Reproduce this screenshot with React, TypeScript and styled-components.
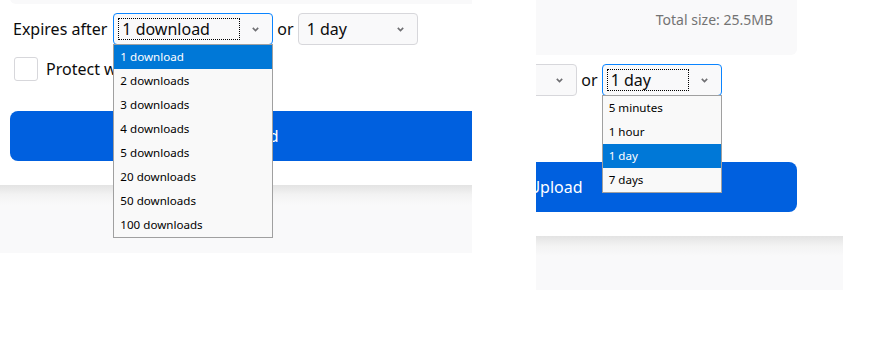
import React from 'react'
import styled, { createGlobalStyle } from 'styled-components'

const GlobalStyle = createGlobalStyle`
  html, body {
    margin:0;
    padding:0;
    background:#fff;
  }
  body {
    font-family: "Noto Sans", "Liberation Sans", Arial, sans-serif;
    color:#0c0c0d;
  }
`

const Stage = styled.div`
  display:flex;
  align-items:flex-start;
  gap:64px;
`

// one crop of the page, the form inside is shifted so the crop shows the right part
const Viewport = styled.div<{ $w: number; $h: number }>`
  flex:none;
  width:${p => p.$w}px;
  height:${p => p.$h}px;
  overflow:hidden;
  background:#fff;
`

const Shift = styled.div<{ $x: number; $y: number }>`
  margin-left:${p => -p.$x}px;
  margin-top:${p => -p.$y}px;
`

const Form = styled.div`
  width:539px;
  display:flex;
  flex-direction:column;
`

const SizeCard = styled.div`
  margin-left:10px;
  width:483px;
  height:64px;
  box-sizing:border-box;
  padding:19px 24px 0 0;
  background:#f9f9fa;
  border-radius:0 0 6px 6px;
  text-align:right;
  font-size:14px;
  line-height:20px;
  color:#737373;
`

const ExpiryRow = styled.div`
  display:flex;
  align-items:center;
  height:32px;
  margin:9px 0 0 13px;
  font-size:16px;
`

const Label = styled.span`
  margin-right:6px;
  white-space:nowrap;
`

const Or = styled.span`
  margin:0 4px;
`

const SelectBox = styled.div<{ $w: number; $focused: boolean }>`
  position:relative;
  flex:none;
  display:flex;
  align-items:center;
  width:${p => p.$w}px;
  height:32px;
  box-sizing:border-box;
  padding:0 13px 0 4px;
  border:1px solid ${p => (p.$focused ? '#0a84ff' : '#d7d7db')};
  border-radius:4px;
  background:#f9f9fa;
`

const Value = styled.span<{ $focused: boolean }>`
  flex:1;
  height:22px;
  box-sizing:border-box;
  margin-right:12px;
  padding:0 3px;
  border:1px dotted ${p => (p.$focused ? '#000' : 'transparent')};
  line-height:20px;
  white-space:nowrap;
`

const Chevron = styled.svg`
  flex:none;
  width:7px;
  height:5px;
`

const OptionList = styled.ul`
  position:absolute;
  z-index:10;
  top:100%;
  left:-1px;
  width:100%;
  margin:0;
  padding:0;
  list-style:none;
  border:1px solid #a0a0a0;
  background:#f9f9f9;
`

const Option = styled.li<{ $active: boolean }>`
  height:24px;
  padding-left:6px;
  font-size:11.6px;
  line-height:24px;
  white-space:nowrap;
  color:${p => (p.$active ? '#fff' : '#000')};
  background:${p => (p.$active ? '#0078d7' : 'transparent')};
`

const CheckRow = styled.label`
  display:flex;
  align-items:center;
  gap:8px;
  margin:12px 0 0 14px;
  font-size:16px;
`

const CheckBox = styled.span`
  width:24px;
  height:24px;
  box-sizing:border-box;
  border:1px solid #d7d7db;
  border-radius:3px;
  background:#fff;
`

const UploadButton = styled.button`
  width:483px;
  height:50px;
  margin:30px 0 0 10px;
  border:none;
  border-radius:8px;
  background:#0060df;
  color:#fff;
  font-family:inherit;
  font-size:16px;
`

const Footer = styled.div`
  height:120px;
  margin-top:24px;
  background:linear-gradient(to bottom, #e3e3e3 0, #f3f3f3 10px, #f9f9fa 20px);
`

const countOptions = ['1 download', '2 downloads', '3 downloads', '4 downloads', '5 downloads', '20 downloads', '50 downloads', '100 downloads']
const timeOptions = ['5 minutes', '1 hour', '1 day', '7 days']

const Select = ({ width, value, options, open }: { width: number; value: string; options: string[]; open: boolean }) => (
  <SelectBox $w={width} $focused={open}>
    <Value $focused={open}>{value}</Value>
    <Chevron viewBox="0 0 7 5">
      <path d="M0.8 0.9 L3.5 3.6 L6.2 0.9" fill="none" stroke="#6f6f72" strokeWidth="1.6" />
    </Chevron>
    {open && (
      <OptionList>
        {options.map(o => (
          <Option key={o} $active={o === value}>{o}</Option>
        ))}
      </OptionList>
    )}
  </SelectBox>
)

const UploadForm = ({ open }: { open: 'count' | 'time' }) => (
  <Form>
    <SizeCard>Total size: 25.5MB</SizeCard>
    <ExpiryRow>
      <Label>Expires after</Label>
      <Select width={160} value="1 download" options={countOptions} open={open === 'count'} />
      <Or>or</Or>
      <Select width={120} value="1 day" options={timeOptions} open={open === 'time'} />
    </ExpiryRow>
    <CheckRow>
      <CheckBox />
      Protect with password
    </CheckRow>
    <UploadButton>Upload</UploadButton>
    <Footer />
  </Form>
)

const App = () => (
  <>
    <GlobalStyle />
    <Stage>
      <Viewport $w={472} $h={253}>
        <Shift $x={0} $y={60}>
          <UploadForm open="count" />
        </Shift>
      </Viewport>
      <Viewport $w={307} $h={290}>
        <Shift $x={232} $y={9}>
          <UploadForm open="time" />
        </Shift>
      </Viewport>
    </Stage>
  </>
)

export default App
